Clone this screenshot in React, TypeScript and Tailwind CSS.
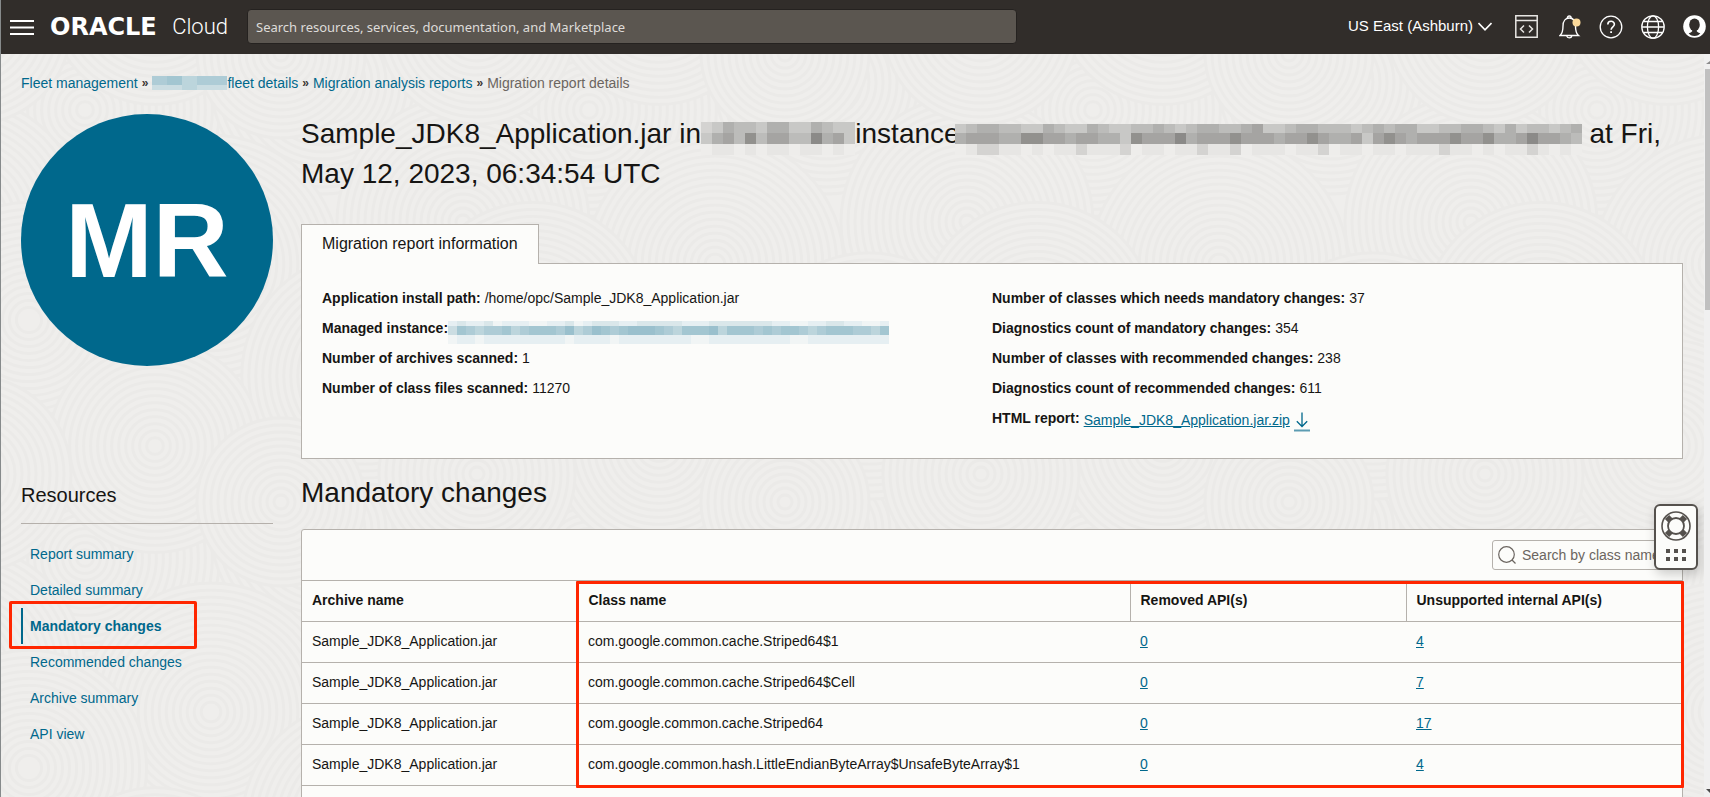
import React from "react";

const navItems = [
  "Report summary",
  "Detailed summary",
  "Mandatory changes",
  "Recommended changes",
  "Archive summary",
  "API view",
];

const rows = [
  { archive: "Sample_JDK8_Application.jar", cls: "com.google.common.cache.Striped64$1", removed: 0, internal: 4 },
  { archive: "Sample_JDK8_Application.jar", cls: "com.google.common.cache.Striped64$Cell", removed: 0, internal: 7 },
  { archive: "Sample_JDK8_Application.jar", cls: "com.google.common.cache.Striped64", removed: 0, internal: 17 },
  {
    archive: "Sample_JDK8_Application.jar",
    cls: "com.google.common.hash.LittleEndianByteArray$UnsafeByteArray$1",
    removed: 0,
    internal: 4,
  },
];

const GREYS = ["#eeedeb", "#e7e6e4", "#d4d3d1", "#c8c8c6", "#bcbcba", "#b0b0ae", "#a5a4a2", "#92918e", "#8b8a88"];
const BLUES = ["#fafbf9", "#f1f5f5", "#e6eff2", "#dae7ea", "#cbdde2", "#bcd5dc", "#aeccd6", "#a3c6d1", "#9ac0cd"];

interface MosaicProps {
  lines: string[];
  heights: number[];
  cell: number;
  palette: string[];
  className?: string;
}

/* Pixelated block that hides private text. Each digit picks a shade. */
function Mosaic({ lines, heights, cell, palette, className }: MosaicProps) {
  const width = lines[0].length * cell;
  const height = heights.reduce((a, b) => a + b, 0);
  let y = 0;
  return (
    <svg width={width} height={height} className={className} shapeRendering="crispEdges" aria-hidden="true">
      {lines.map((line, r) => {
        const top = y;
        y += heights[r];
        return line
          .split("")
          .map((d, c) => (
            <rect key={`${r}-${c}`} x={c * cell} y={top} width={cell} height={heights[r]} fill={palette[Number(d)]} />
          ));
      })}
    </svg>
  );
}

const discs = [
  [60, 40, 96],
  [230, 20, 80],
  [330, 120, 90],
  [150, 150, 92],
  [20, 190, 84],
  [260, 230, 88],
  [110, 280, 76],
  [340, 300, 70],
  [200, 320, 60],
];

function Texture() {
  return (
    <svg className="pointer-events-none absolute inset-0 -z-10 h-full w-full" aria-hidden="true">
      <defs>
        <pattern id="swirl" width="360" height="320" patternUnits="userSpaceOnUse" patternTransform="scale(1.400)">
          <rect width="360" height="320" fill="#efeeec" />
          {discs.map(([cx, cy, r]) =>
            [-360, 0, 360].map((dx) =>
              [-320, 0, 320].map((dy) => (
                <g key={`${cx}-${cy}-${dx}-${dy}`} fill="#efeeec" stroke="#ebeae8" strokeWidth="2">
                  {Array.from({ length: Math.floor(r / 5) }, (_, i) => (
                    <circle key={i} cx={cx + dx} cy={cy + dy} r={r - i * 5} />
                  ))}
                </g>
              )),
            ),
          )}
        </pattern>
      </defs>
      <rect width="100%" height="100%" fill="url(#swirl)" />
    </svg>
  );
}

function Header() {
  return (
    <header className="flex h-[54px] shrink-0 items-center bg-[#312d2a] pb-px pl-[9px] text-white">
      <button aria-label="Open navigation menu" className="mr-4">
        <svg width="24" height="16" viewBox="0 0 24 16" fill="none" stroke="#fff" strokeWidth="2">
          <path d="M0 2h24M0 8.500h24M0 15h24" />
        </svg>
      </button>
      <a href="#home" className="flex w-[178px] items-center justify-between">
        <span className="font-['DejaVu_Sans',sans-serif] text-[24px] leading-[30px] font-bold">ORACLE</span>
        <span className="font-['Roboto',sans-serif] text-[22px] leading-[30px] font-light">Cloud</span>
      </a>
      <input
        type="search"
        aria-label="Search"
        placeholder="Search resources, services, documentation, and Marketplace"
        className="ml-[19px] h-[35px] w-[770px] rounded-[4px] border border-[#252220] bg-[#5b5650] px-2 font-['Noto_Sans',sans-serif] text-[13px] text-white placeholder:text-[#dedcd9] outline-none"
      />
      <div className="ml-auto flex items-center pr-1">
        <button className="flex items-center gap-[5px] text-[15px]">
          US East (Ashburn)
          <svg width="14" height="9" viewBox="0 0 14 9" fill="none" stroke="#fff" strokeWidth="1.6">
            <path d="M0.500 1l6.500 6.800L13.500 1" />
          </svg>
        </button>
        <button aria-label="Developer tools" className="ml-[23px]">
          <svg width="23" height="23" viewBox="0 0 23 23" fill="none" stroke="#e8e6e3" strokeWidth="1.500">
            <path d="M0.800 0.800h21.400v21.400H0.800z M0.800 5.500h21.400" />
            <path d="M9 10.500l-3.500 3.500 3.500 3.500M14 10.500l3.500 3.500-3.500 3.500" />
          </svg>
        </button>
        <button aria-label="Announcements" className="ml-[21px]">
          <svg width="22" height="24" viewBox="0 0 22 24" fill="none" stroke="#fff" strokeWidth="1.400">
            <path d="M1 20.500h18.500c-2.500-2-3-4-3-9.500 0-5-2.500-8-6.200-8S4 6 4 11c0 5.500-.5 7.500-3 9.500z" />
            <path d="M8.500 3c0-2.600 3.600-2.600 3.600 0M7.800 21c.4 2.500 4.500 2.500 5 0" />
            <circle cx="17.500" cy="7.500" r="4" fill="#fbd99a" stroke="none" />
          </svg>
        </button>
        <button aria-label="Help" className="ml-[18px]">
          <svg width="24" height="24" viewBox="0 0 24 24" fill="none" stroke="#fff" strokeWidth="1.300">
            <circle cx="12" cy="12" r="10.800" />
            <path d="M8.800 9.500c0-4.200 6.600-4.200 6.600-.2 0 2.500-3.300 2.500-3.300 5.400" strokeWidth="1.600" />
            <path d="M12.100 16.200v1.800" strokeWidth="1.800" />
          </svg>
        </button>
        <button aria-label="Language" className="ml-[18px]">
          <svg width="24" height="24" viewBox="0 0 24 24" fill="none" stroke="#fff" strokeWidth="1.300">
            <circle cx="12" cy="12" r="11.200" />
            <ellipse cx="12" cy="12" rx="5.600" ry="11.200" />
            <path d="M1 12h22M3 6.500h18M3 17.500h18" />
          </svg>
        </button>
        <button aria-label="Profile" className="ml-[18px]">
          <svg width="23" height="23" viewBox="0 0 23 23">
            <circle cx="11.500" cy="11.500" r="11.300" fill="#fff" />
            <ellipse cx="11.500" cy="9.800" rx="5.300" ry="6.300" fill="#312d2a" />
            <path d="M9.500 15h4c0 2 1.500 2.500 3.800 3.300-1 1.400-3 2.700-5.800 2.700s-4.800-1.300-5.800-2.700c2.300-.8 3.800-1.300 3.800-3.300z" fill="#312d2a" />
          </svg>
        </button>
      </div>
    </header>
  );
}

function Separator() {
  return <span className="px-1 text-[12px] font-bold text-[#3a3633]">»</span>;
}

function Breadcrumb() {
  return (
    <nav aria-label="Breadcrumb" className="flex h-5 items-center text-[14px] text-[#00688c]">
      <a href="#fleet">Fleet management</a>
      <Separator />
      <a href="#details" className="flex items-center" aria-label="fleet details">
        <Mosaic lines={["67566", "44544"]} heights={[9, 5]} cell={15} palette={BLUES} />
        fleet details
      </a>
      <Separator />
      <a href="#reports">Migration analysis reports</a>
      <Separator />
      <span className="text-[#6b6560]">Migration report details</span>
    </nav>
  );
}

function Detail({ label, children }: { label: string; children: React.ReactNode }) {
  return (
    <div className="flex h-[30px] items-center">
      <dt className="font-bold">{label}:</dt>
      <dd className="flex items-center">{children}</dd>
    </div>
  );
}

function Sidebar() {
  return (
    <aside>
      <div className="flex aspect-square w-full items-center justify-center rounded-full bg-[#00688c] text-[105px] leading-none font-bold text-white">
        MR
      </div>
      <h2 className="mt-[115px] border-b border-[#b5b0ab] pb-[14px] text-[20px] leading-7">Resources</h2>
      <ul className="mt-3 text-[14px] text-[#00688c]">
        {navItems.map((item) => {
          const active = item === "Mandatory changes";
          return (
            <li key={item} className="relative">
              <a
                href="#resource"
                aria-current={active ? "page" : undefined}
                className={
                  active
                    ? "flex h-9 items-center border-l-2 border-[#00688c] pl-[7px] font-bold"
                    : "flex h-9 items-center pl-[9px]"
                }
              >
                {item}
              </a>
              {active && (
                <span className="pointer-events-none absolute -top-[7px] -left-3 h-12 w-[188px] rounded-[2px] border-[3px] border-[#ff2600]" />
              )}
            </li>
          );
        })}
      </ul>
    </aside>
  );
}

function ReportPanel() {
  return (
    <section className="mt-[30px]">
      <div role="tablist" className="relative -mb-px flex">
        <button
          role="tab"
          aria-selected="true"
          className="h-10 border border-b-0 border-[#b5b1ac] bg-[#fcfcfa] px-5 pb-0.5 text-[16px]"
        >
          Migration report information
        </button>
      </div>
      <div className="border border-[#b5b1ac] bg-[#fcfcfa] px-5 pt-[19px] pb-[25px]">
        <dl className="grid grid-cols-2 text-[14px]">
          <div>
            <Detail label="Application install path">
              <span className="pl-1">/home/opc/Sample_JDK8_Application.jar</span>
            </Detail>
            <Detail label="Managed instance">
              <Mosaic
                lines={[
                  "2322312221122312333223333322233333332211223322112",
                  "4765667567776856876788876577785777676776567776657",
                  "1221222222222122221222222221122222222211222222222",
                ]}
                heights={[5, 9, 9]}
                cell={9}
                palette={BLUES}
                className="mt-2"
              />
            </Detail>
            <Detail label="Number of archives scanned">
              <span className="pl-1">1</span>
            </Detail>
            <Detail label="Number of class files scanned">
              <span className="pl-1">11270</span>
            </Detail>
          </div>
          <div>
            <Detail label="Number of classes which needs mandatory changes">
              <span className="pl-1">37</span>
            </Detail>
            <Detail label="Diagnostics count of mandatory changes">
              <span className="pl-1">354</span>
            </Detail>
            <Detail label="Number of classes with recommended changes">
              <span className="pl-1">238</span>
            </Detail>
            <Detail label="Diagnostics count of recommended changes">
              <span className="pl-1">611</span>
            </Detail>
            <Detail label="HTML report">
              <a href="#download" className="flex items-center gap-1 pt-1 pl-1 text-[#00688c] underline">
                Sample_JDK8_Application.jar.zip
                <svg width="16" height="20" viewBox="0 0 16 20" fill="none" stroke="#00688c" strokeWidth="1.300" className="mt-1">
                  <path d="M8 0.500v14M2.800 9.300L8 14.500l5.200-5.200" />
                  <path d="M0 18.500h16" stroke="#5c9cb2" strokeWidth="2" />
                </svg>
              </a>
            </Detail>
          </div>
        </dl>
      </div>
    </section>
  );
}

function ChangesTable() {
  return (
    <section>
      <h2 className="mt-[14px] text-[28px] leading-10">Mandatory changes</h2>
      <div className="relative mt-4 rounded-t-[3px] border border-[#b5b1ac] bg-[#fcfcfa]">
        <div className="flex h-[50px] items-center justify-end pr-[10px]">
          <label className="flex h-[30px] w-[180px] items-center gap-[6px] rounded-[3px] border border-[#b5b1ac] pl-[5px]">
            <svg width="18" height="18" viewBox="0 0 18 18" fill="none" stroke="#6b6560" strokeWidth="1.200" className="shrink-0">
              <circle cx="8.500" cy="8.500" r="7.800" />
              <path d="M14 14l3.500 3.500" />
            </svg>
            <input
              type="search"
              aria-label="Search by class name"
              placeholder="Search by class name"
              className="w-full min-w-0 bg-transparent text-[14px] outline-none placeholder:text-[#6b6560]"
            />
          </label>
        </div>
        <table className="w-full table-fixed border-collapse text-left text-[14px]">
          <colgroup>
            <col className="w-[20%]" />
            <col className="w-[40%]" />
            <col className="w-[20%]" />
            <col className="w-[20%]" />
          </colgroup>
          <thead>
            <tr className="h-[41px] border-y border-[#b5b1ac]">
              <th className="border-r border-[#b5b1ac] px-[10px] pb-0.5">Archive name</th>
              <th className="border-r border-[#b5b1ac] px-[10px] pb-0.5">Class name</th>
              <th className="border-r border-[#b5b1ac] px-[10px] pb-0.5">Removed API(s)</th>
              <th className="px-[10px] pb-0.5">Unsupported internal API(s)</th>
            </tr>
          </thead>
          <tbody>
            {rows.map((row) => (
              <tr key={row.cls} className="h-[41px] border-b border-[#b5b1ac]">
                <td className="px-[10px] pb-0.5">{row.archive}</td>
                <td className="px-[10px] pb-0.5">{row.cls}</td>
                <td className="px-[10px] pb-0.5">
                  <a href="#removed" className="text-[#00688c] underline">
                    {row.removed}
                  </a>
                </td>
                <td className="px-[10px] pb-0.5">
                  <a href="#internal" className="text-[#00688c] underline">
                    {row.internal}
                  </a>
                </td>
              </tr>
            ))}
            <tr className="h-[41px]">
              <td colSpan={4} />
            </tr>
          </tbody>
        </table>
        <span className="pointer-events-none absolute top-[51px] -right-[2px] left-[20%] -ml-0.5 h-[207px] rounded-[1px] border-[3px] border-[#ff2600]" />
        <button
          aria-label="Support"
          className="absolute -top-[26px] -right-[16px] flex h-[66px] w-[44px] flex-col items-center justify-between rounded-[6px] border-2 border-[#55514d] bg-[#fcfcfa] pt-[5px] pb-[7px] shadow-[2px_4px_12px_rgba(0,0,0,0.2)]"
        >
          <svg width="30" height="30" viewBox="0 0 30 30" fill="none">
            <path d="M6 6l5 5M24 6l-5 5M6 24l5-5M24 24l-5-5" stroke="#55514d" strokeWidth="6" />
            <circle cx="15" cy="15" r="14" stroke="#55514d" strokeWidth="1.600" />
            <circle cx="15" cy="15" r="8" fill="#fcfcfa" stroke="#55514d" strokeWidth="1.800" />
          </svg>
          <svg width="20" height="12" viewBox="0 0 20 12" fill="#55514d" shapeRendering="crispEdges">
            <path d="M0 0h4v4H0zM8 0h4v4H8zM16 0h4v4h-4zM0 8h4v4H0zM8 8h4v4H8zM16 8h4v4h-4z" />
          </svg>
        </button>
      </div>
    </section>
  );
}

function ScrollRail() {
  return (
    <div className="flex w-[6px] shrink-0 flex-col justify-between bg-[#f0f0f0] pt-[7px] pb-1" aria-hidden="true">
      <div className="flex flex-col gap-[5px] pl-px">
        <svg width="5" height="3" viewBox="0 0 5 3" fill="#8a8a8a">
          <path d="M1 3L5 0v3z" />
        </svg>
        <div className="h-[241px] bg-[#c0c0c0]" />
      </div>
      <svg width="6" height="4" viewBox="0 0 6 4" fill="#4a4a4a">
        <path d="M2 0h4v4z" />
      </svg>
    </div>
  );
}

export default function App() {
  return (
    <div className="flex h-screen flex-col overflow-hidden border-l border-[#868a8b] bg-[#efeeec] font-['Liberation_Sans',sans-serif] text-[#161513]">
      <Header />
      <div className="flex min-h-0 flex-1">
        <main className="relative isolate min-w-0 flex-1 overflow-hidden pt-[19px] pr-[21px] pl-5">
          <Texture />
          <Breadcrumb />
          <div className="mt-[21px] grid grid-cols-[252px_1fr] gap-7">
            <Sidebar />
            <div className="min-w-0">
              <h1 className="text-[28px] leading-10">
                Sample_JDK8_Application.jar in
                <Mosaic
                  lines={["23544355335433", "35647466448563", "01101011011010"]}
                  heights={[11, 11, 11]}
                  cell={11}
                  palette={GREYS}
                  className="relative -mr-[9px] -mb-3 inline-block align-baseline"
                />
                -instance
                <Mosaic
                  lines={[
                    "345544335433543344543455445633455444345455334455435344345",
                    "566655776656655376668566676665667655636765666766755686654",
                    "012211010112111201101121120111011201101101112110101121010",
                  ]}
                  heights={[9, 11, 11]}
                  cell={11}
                  palette={GREYS}
                  className="relative -mb-3 -ml-[5px] inline-block align-baseline"
                />{" "}
                at Fri, May 12, 2023, 06:34:54 UTC
              </h1>
              <ReportPanel />
              <ChangesTable />
            </div>
          </div>
        </main>
        <ScrollRail />
      </div>
    </div>
  );
}
